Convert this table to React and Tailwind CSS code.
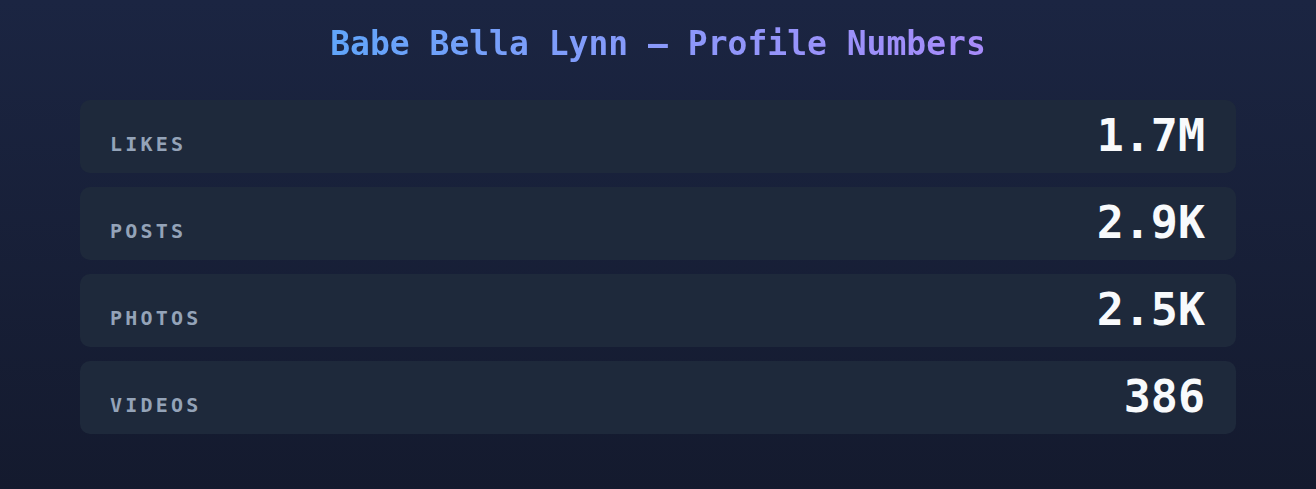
const stats = [
  { label: "Likes", value: "1.7M" },
  { label: "Posts", value: "2.9K" },
  { label: "Photos", value: "2.5K" },
  { label: "Videos", value: "386" },
];

export default function App() {
  return (
    <div className="min-h-screen bg-gradient-to-b from-[#1b2542] to-[#141a2e] px-20 pt-6 pb-10 font-['DejaVu_Sans_Mono',monospace]">
      <h1 className="mb-9 text-center text-[33px] leading-[40px] font-bold">
        <span className="bg-gradient-to-r from-[#60a5fa] to-[#a78bfa] bg-clip-text text-transparent">
          Babe Bella Lynn — Profile Numbers
        </span>
      </h1>

      <div className="flex flex-col gap-[14px]">
        {stats.map((s) => (
          <div
            key={s.label}
            className="flex items-baseline justify-between rounded-[10px] bg-[#1e293b] pt-3 pb-[13px] pl-[30px] pr-[31px]"
          >
            <span className="text-[20px] font-bold uppercase tracking-[0.16em] text-[#94a3b8]">
              {s.label}
            </span>
            <span className="text-[45px] leading-[48px] font-bold text-[#f8fafc]">
              {s.value}
            </span>
          </div>
        ))}
      </div>
    </div>
  );
}
